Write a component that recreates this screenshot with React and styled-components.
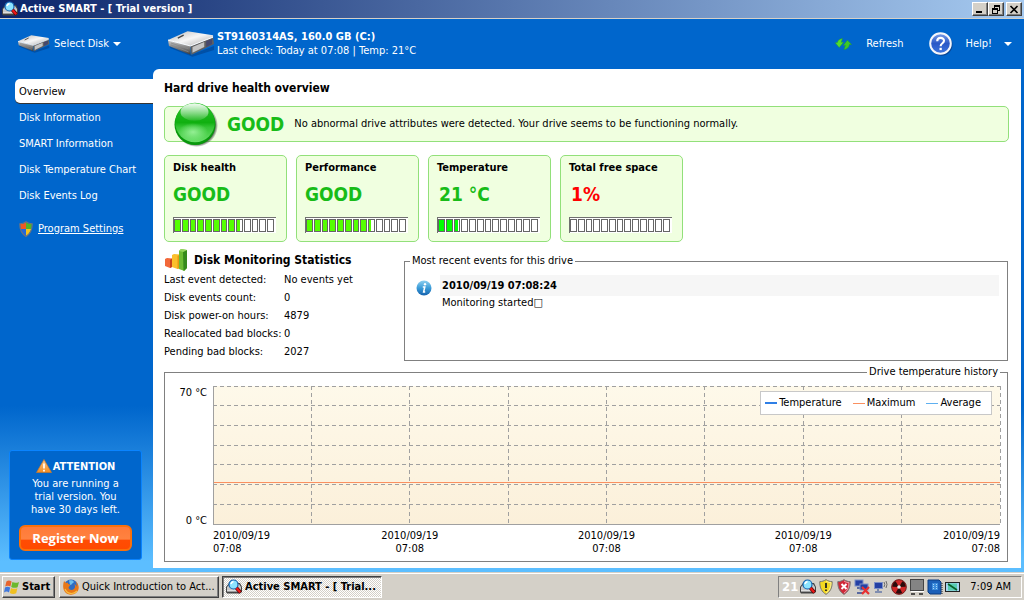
import React from 'react';
import styled, { createGlobalStyle, css } from 'styled-components';

const navItems = [
  'Overview',
  'Disk Information',
  'SMART Information',
  'Disk Temperature Chart',
  'Disk Events Log',
];

const cards = [
  { title: 'Disk health', value: 'GOOD', level: 8.5, fill: '#55ff00' },
  { title: 'Performance', value: 'GOOD', level: 8.5, fill: '#55ff00' },
  { title: 'Temperature', value: '21 °C', level: 2.7, fill: '#00ff00', inset: true },
  { title: 'Total free space', value: '1%', level: 0, fill: '#00ff00', inset: true, alert: true },
];

const stats = [
  ['Last event detected:', 'No events yet'],
  ['Disk events count:', '0'],
  ['Disk power-on hours:', '4879'],
  ['Reallocated bad blocks:', '0'],
  ['Pending bad blocks:', '2027'],
];

const series = [
  { name: 'Temperature', color: '#2f7fe6', weight: 2 },
  { name: 'Maximum', color: '#fa9060', weight: 1 },
  { name: 'Average', color: '#5fb0f0', weight: 1 },
];

const ticks = [0, 1, 2, 3, 4];

/* icons */

const DriveIcon = ({ width, height }) => (
  <svg width={width} height={height} viewBox="0 0 48 26" aria-hidden="true">
    <defs>
      <linearGradient id="driveTop" x1="0" y1="0" x2="1" y2="1">
        <stop offset="0" stopColor="#b8b8b8" />
        <stop offset="0.5" stopColor="#f6f6f6" />
        <stop offset="1" stopColor="#a8a8a8" />
      </linearGradient>
      <linearGradient id="driveSide" x1="0" y1="0" x2="0" y2="1">
        <stop offset="0" stopColor="#d0d0d0" />
        <stop offset="1" stopColor="#383838" />
      </linearGradient>
    </defs>
    <path d="M2 14 L24 24 L47 15 L47 19 L25 26 L2 17 Z" fill="#003a80" opacity="0.5" />
    <path d="M0 9 L23 15 L23 24 L1 15 Z" fill="url(#driveSide)" />
    <path d="M23 15 L46 6 L47 13 L24 24 Z" fill="#606060" />
    <path d="M25 16 L37 11 L37 16 L25 22 Z" fill="#c4c4c4" />
    <path d="M39 10 L45 8 L45 13 L39 16 Z" fill="#46486c" />
    <path d="M0 9 L20 0 L46 4 L46 6 L23 15 Z" fill="url(#driveTop)" />
    <path d="M0 9 L23 15 L46 6" fill="none" stroke="#fff" strokeWidth="1" />
    <path d="M10 7 L16 4" stroke="#444" strokeWidth="1.3" />
    <path d="M3 12 L21 18 M3 14 L21 21" stroke="#8a8a8a" strokeWidth="0.8" />
  </svg>
);

const SmartIcon = () => (
  <svg width="16" height="16" viewBox="0 0 16 16" aria-hidden="true">
    <path d="M0 8 L3 4 H14 L16 8 V13 L14 14.5 H1 L0 13 Z" fill="#444" />
    <path d="M1 8 L4 5 H13 L15 8 V12 H1 Z" fill="#c8c8c8" />
    <path d="M1 12 H14" stroke="#f4f4f4" />
    <circle cx="7.5" cy="5.5" r="4.5" fill="#8ce4ff" stroke="#1464b4" strokeWidth="1.2" />
    <path d="M5 5 A3 3 0 0 1 7.5 2.6" fill="none" stroke="#fff" strokeWidth="1.6" />
    <path d="M10.5 9 L14.5 13.5" stroke="#500" strokeWidth="3.6" />
    <path d="M10.5 9 L14.2 13.2" stroke="#f01818" strokeWidth="2.2" />
  </svg>
);

const RefreshIcon = () => (
  <svg width="17" height="12" viewBox="0 0 17 12" aria-hidden="true">
    <path d="M7.5 0.5 L6.2 4.2 H8.6 L4.2 9.6 L0.2 4.8 L2.4 4.6 C2.8 2.2 4.6 0.8 7.5 0.5 Z" fill="#52dc2c" stroke="#2a9c1c" strokeWidth="0.4" />
    <path d="M9 11.6 L10.4 7.4 H8.2 L12.4 2.2 L16.6 6.6 H14.4 C14 9.6 12 11.2 9 11.6 Z" fill="#3cc828" stroke="#2a9c1c" strokeWidth="0.4" />
  </svg>
);

const HelpIcon = () => (
  <svg width="24" height="24" viewBox="0 0 24 24" aria-hidden="true">
    <defs>
      <linearGradient id="helpFill" x1="0" y1="0" x2="0" y2="1">
        <stop offset="0" stopColor="#7da0ea" />
        <stop offset="0.5" stopColor="#2a58c6" />
        <stop offset="1" stopColor="#3c76e0" />
      </linearGradient>
    </defs>
    <circle cx="12.5" cy="12.8" r="11" fill="#0b2f70" opacity="0.6" />
    <circle cx="11.5" cy="11.5" r="10.3" fill="url(#helpFill)" stroke="#f4f6fb" strokeWidth="2" />
    <path d="M8.2 9.2 C8.2 4.8 15 4.8 15 8.8 C15 11.4 11.6 11.2 11.6 14.2" fill="none" stroke="#fff" strokeWidth="2.1" />
    <rect x="10.5" y="15.8" width="2.3" height="2.3" fill="#fff" />
  </svg>
);

const ShieldIcon = () => (
  <svg width="14" height="16" viewBox="0 0 14 16" aria-hidden="true">
    <clipPath id="shieldClip">
      <path d="M7 1.2 C9 2.6 10.8 3 12.8 3 C13 8.6 11 12.6 7 15 C3 12.6 1 8.6 1.2 3 C3.2 3 5 2.6 7 1.2 Z" />
    </clipPath>
    <g clipPath="url(#shieldClip)">
      <rect width="7" height="8" fill="#ee5a22" />
      <rect x="7" width="7" height="8" fill="#54b422" />
      <rect y="8" width="7" height="8" fill="#2268dc" />
      <rect x="7" y="8" width="7" height="8" fill="#f4c41c" />
    </g>
    <path d="M7 0.8 C9 2.3 10.8 2.8 13.2 2.8 C13.4 8.6 11.2 13 7 15.4 C2.8 13 0.6 8.6 0.8 2.8 C3.2 2.8 5 2.3 7 0.8 Z" fill="none" stroke="#6d7480" strokeWidth="1.1" />
  </svg>
);

const WarningIcon = () => (
  <svg width="16" height="14" viewBox="0 0 16 14" aria-hidden="true">
    <defs>
      <linearGradient id="warnFill" x1="0" y1="0" x2="0" y2="1">
        <stop offset="0" stopColor="#f8c890" />
        <stop offset="1" stopColor="#f28c20" />
      </linearGradient>
    </defs>
    <path d="M8 0.5 L15.5 13.5 H0.5 Z" fill="url(#warnFill)" stroke="#c87828" strokeWidth="0.7" strokeLinejoin="round" />
    <path d="M8 4.5 V9.5 M8 10.8 V12.4" stroke="#fff" strokeWidth="1.7" />
  </svg>
);

const OrbIcon = () => (
  <svg width="46" height="46" viewBox="0 0 46 46" aria-hidden="true">
    <defs>
      <linearGradient id="orbFill" x1="0" y1="0" x2="0" y2="1">
        <stop offset="0" stopColor="#2cc42c" />
        <stop offset="0.5" stopColor="#10b010" />
        <stop offset="0.62" stopColor="#34c434" />
        <stop offset="1" stopColor="#6ce06c" />
      </linearGradient>
      <linearGradient id="orbShine" x1="0" y1="0" x2="0" y2="1">
        <stop offset="0" stopColor="#ffffff" stopOpacity="0.95" />
        <stop offset="1" stopColor="#ffffff" stopOpacity="0.08" />
      </linearGradient>
      <radialGradient id="orbGlow">
        <stop offset="0" stopColor="#a8f8a8" stopOpacity="0.8" />
        <stop offset="1" stopColor="#a8f8a8" stopOpacity="0" />
      </radialGradient>
      <radialGradient id="orbShadow">
        <stop offset="0.86" stopColor="#405040" stopOpacity="0.9" />
        <stop offset="1" stopColor="#405040" stopOpacity="0" />
      </radialGradient>
    </defs>
    <circle cx="23.5" cy="24.5" r="21.5" fill="url(#orbShadow)" />
    <circle cx="22" cy="23.5" r="20.5" fill="#08980c" />
    <circle cx="22" cy="21.5" r="19.8" fill="url(#orbFill)" />
    <ellipse cx="20" cy="31" rx="15" ry="9" fill="url(#orbGlow)" />
    <ellipse cx="21.5" cy="11" rx="14" ry="8.8" fill="url(#orbShine)" />
  </svg>
);

const BarsIcon = () => (
  <svg width="24" height="22" viewBox="0 1 24 22" aria-hidden="true">
    <path d="M1 11 L3 10 L8 10.5 V19 L6 20 L1 18 Z" fill="#f2683a" />
    <path d="M6 12 L8 10.5 V19 L6 20 Z" fill="#c6431c" />
    <path d="M8 7 L10 6 L16 6.5 V20 L13.5 21 L8 19 Z" fill="#fbbf2c" />
    <path d="M13.5 8 L16 6.5 V20 L13.5 21 Z" fill="#e69a10" />
    <path d="M15 3 L17 1 L23 2 V20 L20.5 23 L15 21 Z" fill="#6cbc34" />
    <path d="M19 4 L23 2 V20 L19.5 23 Z" fill="#358a1c" />
    <path d="M15 3 L17 1 L23 2 L19 4 Z" fill="#93d45c" />
  </svg>
);

const InfoIcon = () => (
  <svg width="16" height="16" viewBox="0 0 16 16" aria-hidden="true">
    <defs>
      <linearGradient id="infoFill" x1="0" y1="0" x2="0" y2="1">
        <stop offset="0" stopColor="#8fd0f0" />
        <stop offset="0.5" stopColor="#3b9cd8" />
        <stop offset="1" stopColor="#1562ae" />
      </linearGradient>
    </defs>
    <circle cx="8" cy="8" r="7.5" fill="url(#infoFill)" />
    <circle cx="9" cy="4.2" r="1.2" fill="#fff" />
    <path d="M6.8 7 H8.8 L7.6 12 H9.2" fill="none" stroke="#fff" strokeWidth="1.5" />
  </svg>
);

const WindowsIcon = () => (
  <svg width="16" height="16" viewBox="0 0 16 16" aria-hidden="true">
    <path d="M2.4 2.4 C4.2 1.2 5.8 1.4 7.6 2.4 L6.4 7.4 C4.6 6.4 3 6.4 1.2 7.4 Z" fill="#e8642c" />
    <path d="M8.4 3 C10.2 4 12.4 4.2 15 3 L13.6 8.2 C11.4 9.2 9.2 9 7.2 8 Z" fill="#6cb82c" />
    <path d="M1 8.4 C2.8 7.4 4.4 7.6 6.2 8.4 L5 13.4 C3.4 12.2 1.8 12.2 0 13.4 Z" fill="#4078dc" />
    <path d="M7 9 C9 10 11 10.2 13.4 9.2 L12.2 14.2 C9.8 15.4 7.8 15 5.8 14 Z" fill="#f0c020" />
  </svg>
);

const FirefoxIcon = () => (
  <svg width="16" height="16" viewBox="0 0 16 16" aria-hidden="true">
    <circle cx="8" cy="7.5" r="7" fill="#2c6cc4" />
    <path d="M6 1.5 C10 0.5 12 3 10 4 C8 5 9 6 7 6" fill="#6cc0ec" />
    <path d="M1 2 L3 4 L5 3.4 C4.4 5 6 5.4 7.4 5.6 C7 7.4 5.4 7.6 5.6 9 C6.4 11 9 11.6 11 10 C12.6 8.6 12 6.4 11.4 5 C13 6 13.4 7 13.4 8 C14 6 13.6 4 12.6 2.4 C16.6 5.6 16.8 11 13 14 C9.6 16.6 4.6 16.2 2 13 C-0.4 10 -0.2 5.6 1 2 Z" fill="#e87818" />
    <path d="M2 10 C4 15 10 16 14 12" fill="none" stroke="#f8c040" strokeWidth="1.2" />
  </svg>
);

const TrayShield = ({ color, danger }) => (
  <svg width="16" height="16" viewBox="0 0 16 16" aria-hidden="true">
    <path d="M8 0.6 C10 2 12 2.6 14.2 2.6 C14.4 9 12 13 8 15.4 C4 13 1.6 9 1.8 2.6 C4 2.6 6 2 8 0.6 Z" fill={color} stroke="#777" />
    <path d="M8 2 C9.6 3.2 11.4 3.6 13 3.7 C13 9 11.2 12 8 14" fill="none" stroke="#fff" strokeWidth="0.8" opacity="0.7" />
    {danger
      ? <path d="M5.5 5 L10.5 10 M10.5 5 L5.5 10" stroke="#fff" strokeWidth="2" />
      : <path d="M8 4 V9 M8 10.5 V12" stroke="#222" strokeWidth="1.8" />}
  </svg>
);

const NetworkIcon = () => (
  <svg width="17" height="16" viewBox="0 0 17 16" aria-hidden="true">
    <rect x="1" y="1" width="8" height="6" fill="#2440a4" stroke="#7c90c8" />
    <path d="M3 9 H8" stroke="#5a6aa0" strokeWidth="2" />
    <rect x="6" y="5" width="8" height="6" fill="#2440a4" stroke="#7c90c8" />
    <path d="M3 14 H9" stroke="#5a6aa0" strokeWidth="2" />
    <path d="M8 8 L15 15 M15 8 L8 15" stroke="#e83030" strokeWidth="2.2" />
  </svg>
);

const WirelessIcon = () => (
  <svg width="16" height="16" viewBox="0 0 16 16" aria-hidden="true">
    <rect x="1.5" y="3.5" width="8" height="6" fill="#2440a4" stroke="#7c90c8" />
    <path d="M5 10 V12 M2 13 H9" stroke="#6478a8" strokeWidth="1.6" />
    <path d="M11 3 Q12.5 5.5 11 8 M13 2 Q15 5.5 13 9" fill="none" stroke="#6a6a6a" strokeWidth="1" />
  </svg>
);

const RadiationIcon = () => (
  <svg width="16" height="16" viewBox="0 0 16 16" aria-hidden="true">
    <circle cx="8" cy="8" r="7.4" fill="#d02828" stroke="#5c1414" strokeWidth="0.8" />
    <g fill="#2a0c0c">
      <path d="M8 8 L4.8 2.2 A6.6 6.6 0 0 1 11.2 2.2 Z" transform="rotate(60 8 8)" />
      <path d="M8 8 L4.8 2.2 A6.6 6.6 0 0 1 11.2 2.2 Z" transform="rotate(180 8 8)" />
      <path d="M8 8 L4.8 2.2 A6.6 6.6 0 0 1 11.2 2.2 Z" transform="rotate(300 8 8)" />
    </g>
    <circle cx="8" cy="8" r="1.8" fill="#eee" />
  </svg>
);

const ConnectionIcon = () => (
  <svg width="16" height="16" viewBox="0 0 16 16" aria-hidden="true">
    <rect x="1.5" y="0.5" width="13" height="11" fill="#848484" stroke="#444" />
    <path d="M2 12.5 H15" stroke="#fff" />
    <path d="M2 15 H6 M10 15 H14" stroke="#222" strokeWidth="1.6" />
  </svg>
);

const ChipIcon = () => (
  <svg width="16" height="16" viewBox="0 0 16 16" aria-hidden="true">
    <path d="M1 1 H12 L14 3 V15 H3 L1 13 Z" fill="#1c60b8" stroke="#0c3c80" />
    <rect x="5" y="4" width="6" height="7" fill="#3c8cdc" />
    <path d="M6 5.5 H7 M9 5.5 H10 M6 7.5 H7 M9 7.5 H10 M6 9.5 H7 M9 9.5 H10" stroke="#a8d4f8" />
    <path d="M15 4 V15" stroke="#222" strokeDasharray="1 1" />
  </svg>
);

const MonitorIcon = () => (
  <svg width="16" height="16" viewBox="0 0 16 16" aria-hidden="true">
    <rect x="0.5" y="3.5" width="14" height="9" fill="#a4d4f0" stroke="#222" />
    <path d="M3 4.5 H12 V11.5 H3 Z" fill="#58ccb0" />
    <path d="M3 5 L12 11" stroke="#086028" strokeWidth="1.6" />
  </svg>
);

const Caret = () => (
  <svg width="8" height="4" viewBox="0 0 8 4" aria-hidden="true">
    <path d="M0 0 H8 L4 4 Z" fill="#fff" />
  </svg>
);

const Meter = ({ level, fill }) => (
  <MeterTrack>
    {Array.from({ length: 13 }, (_, i) => (
      <MeterCell
        key={i}
        $fill={fill}
        $part={Math.round(Math.max(0, Math.min(1, level - i)) * 100)}
      />
    ))}
  </MeterTrack>
);

const TemperaturePlot = () => (
  <Plot>
    <PlotSvg role="img" aria-label="Drive temperature history">
      <defs>
        <linearGradient id="plotFill" x1="0" y1="0" x2="0" y2="1">
          <stop offset="0" stopColor="#fef9ea" />
          <stop offset="1" stopColor="#fbf0da" />
        </linearGradient>
      </defs>
      <rect width="100%" height="100%" fill="url(#plotFill)" />
      <g stroke="#a0a0a0" strokeDasharray="4 3" shapeRendering="crispEdges">
        {[0, 1, 2, 3, 4, 5, 6].map(n => (
          <line key={`h${n}`} x1="0" x2="100%" y1={`${(n * 100) / 7}%`} y2={`${(n * 100) / 7}%`} />
        ))}
        {[1, 2, 3, 4, 5, 6, 7, 8].map(n => (
          <line key={`v${n}`} x1={`${n * 12.5}%`} x2={`${n * 12.5}%`} y1="0" y2="100%" />
        ))}
      </g>
      <line x1="0" x2="100%" y1="70%" y2="70%" stroke="#fa9060" shapeRendering="crispEdges" />
      <g stroke="#a0a0a0" shapeRendering="crispEdges">
        <line x1="0" x2="0" y1="0" y2="100%" />
        <line x1="0" x2="100%" y1="100%" y2="100%" />
      </g>
    </PlotSvg>
    <Series>
      {series.map(({ name, color, weight }) => (
        <SeriesItem key={name} $color={color} $weight={weight}>{name}</SeriesItem>
      ))}
    </Series>
  </Plot>
);

const App = () => {
  return (
    <>
      <GlobalStyle />
      <Screen>
        <TitleBar>
          <SmartIcon />
          <h1>Active SMART - [ Trial version ]</h1>
          <WindowButton aria-label="Minimize">
            <svg width="10" height="9" viewBox="0 0 10 9"><path d="M1 7 H7" stroke="#000" strokeWidth="2" /></svg>
          </WindowButton>
          <WindowButton aria-label="Restore">
            <svg width="10" height="9" viewBox="0 0 10 9" shapeRendering="crispEdges">
              <path d="M3 0 H9 V6 H7 V5 H8 V2 H4 V3 H3 Z M1 3 H7 V9 H1 Z M2 5 V8 H6 V5 Z" fillRule="evenodd" />
            </svg>
          </WindowButton>
          <WindowButton aria-label="Close" $apart>
            <svg width="10" height="9" viewBox="0 0 10 9"><path d="M1.5 1 L8.5 8 M8.5 1 L1.5 8" stroke="#000" strokeWidth="1.6" /></svg>
          </WindowButton>
        </TitleBar>

        <Body>
          <Header>
            <SelectDisk>
              <DriveIcon width={32} height={18} />
              Select Disk
              <Caret />
            </SelectDisk>
            <Drive>
              <DriveIcon width={47} height={26} />
              <div>
                <strong>ST9160314AS, 160.0 GB (C:)</strong>
                <p>Last check: Today at 07:08 | Temp: 21°C</p>
              </div>
            </Drive>
            <HeaderButton $gap={14}>
              <RefreshIcon />
              Refresh
            </HeaderButton>
            <HeaderButton $gap={12}>
              <HelpIcon />
              Help!
              <Caret />
            </HeaderButton>
          </Header>

          <Columns>
            <Sidebar>
              <nav>
                {navItems.map((item, i) => (
                  <NavLink key={item} href="#" $active={i === 0}>{item}</NavLink>
                ))}
                <SettingsLink href="#">
                  <ShieldIcon />
                  <span>Program Settings</span>
                </SettingsLink>
              </nav>
              <Promo>
                <h2><WarningIcon />ATTENTION</h2>
                <p>You are running a trial version. You have 30 days left.</p>
                <RegisterButton>Register Now</RegisterButton>
              </Promo>
            </Sidebar>

            <Main>
              <PageTitle>Hard drive health overview</PageTitle>
              <Banner>
                <OrbIcon />
                <Status>GOOD</Status>
                <p>No abnormal drive attributes were detected. Your drive seems to be functioning normally.</p>
              </Banner>

              <Cards>
                {cards.map(({ title, value, level, fill, inset, alert }) => (
                  <Card key={title}>
                    <h3>{title}</h3>
                    <Status $alert={alert} $inset={inset}>{value}</Status>
                    <Meter level={level} fill={fill} />
                  </Card>
                ))}
              </Cards>

              <Details>
                <section>
                  <StatsTitle><BarsIcon />Disk Monitoring Statistics</StatsTitle>
                  <StatsTable>
                    <tbody>
                      {stats.map(([label, value]) => (
                        <tr key={label}>
                          <th scope="row">{label}</th>
                          <td>{value}</td>
                        </tr>
                      ))}
                    </tbody>
                  </StatsTable>
                </section>
                <Group>
                  <legend>Most recent events for this drive</legend>
                  <Event>
                    <InfoIcon />
                    <div>
                      <strong>2010/09/19 07:08:24</strong>
                      <p>Monitoring started□</p>
                    </div>
                  </Event>
                </Group>
              </Details>

              <HistoryGroup>
                <legend>Drive temperature history</legend>
                <Chart>
                  <YAxis>
                    <span>70 °C</span>
                    <span>0 °C</span>
                  </YAxis>
                  <TemperaturePlot />
                  <XAxis>
                    {ticks.map(n => (
                      <span key={n}>2010/09/19<br />07:08</span>
                    ))}
                  </XAxis>
                </Chart>
              </HistoryGroup>
            </Main>
          </Columns>
        </Body>

        <Taskbar>
          <StartButton><WindowsIcon />Start</StartButton>
          <TaskButton><FirefoxIcon />Quick Introduction to Act...</TaskButton>
          <TaskButton $pressed><SmartIcon />Active SMART - [ Trial...</TaskButton>
          <Tray>
            <TrayTemp>21</TrayTemp>
            <SmartIcon />
            <TrayShield color="#f4d820" />
            <TrayShield color="#d02838" danger />
            <NetworkIcon />
            <WirelessIcon />
            <RadiationIcon />
            <ConnectionIcon />
            <ChipIcon />
            <MonitorIcon />
            <time>7:09 AM</time>
          </Tray>
        </Taskbar>
      </Screen>
    </>
  );
};

const GlobalStyle = createGlobalStyle`
  * {
    box-sizing: border-box;
  }
  body {
    margin: 0;
    font: 11px/14px Tahoma, 'DejaVu Sans Condensed', 'DejaVu Sans', sans-serif;
    color: #000;
  }
  h1, h2, h3, p {
    margin: 0;
    font-size: inherit;
  }
  button {
    font: inherit;
    color: inherit;
    border: 0;
    padding: 0;
    background: none;
  }
  svg {
    flex: none;
    display: block;
  }
`;

const raised = css`
  background: #d4d0c8;
  border: 1px solid;
  border-color: #fff #404040 #404040 #fff;
  box-shadow: inset -1px -1px #808080;
`;

const Screen = styled.div`
  min-height: 100vh;
  display: flex;
  flex-direction: column;
`;

const TitleBar = styled.header`
  height: 19px;
  display: flex;
  align-items: center;
  padding: 0 2px;
  color: #fff;
  background: linear-gradient(90deg, #0a246a, #a6caf0);
  border-bottom: 1px solid #d4d0c8;
  h1 {
    flex: 1;
    margin-left: 2px;
  }
`;

const WindowButton = styled.button`
  ${raised}
  width: 16px;
  height: 14px;
  display: flex;
  justify-content: center;
  align-items: center;
  margin-left: ${props => (props.$apart ? '2px' : 0)};
`;

const Body = styled.div`
  flex: 1;
  display: flex;
  flex-direction: column;
  background: linear-gradient(#0066cc 70%, #5cbeff 98%);
`;

const Header = styled.div`
  height: 50px;
  display: flex;
  align-items: center;
  padding: 0 12px 0 18px;
  color: #fff;
`;

const SelectDisk = styled.button`
  width: 150px;
  display: flex;
  align-items: center;
  gap: 4px;
`;

const Drive = styled.div`
  flex: 1;
  display: flex;
  align-items: center;
  gap: 2px;
`;

const HeaderButton = styled.button`
  display: flex;
  align-items: center;
  gap: ${props => props.$gap}px;
  margin-left: 26px;
`;

const Columns = styled.div`
  flex: 1;
  display: flex;
  padding: 0 3px 4px 0;
`;

const Sidebar = styled.aside`
  width: 153px;
  display: flex;
  flex-direction: column;
  justify-content: space-between;
  padding: 10px 0 8px;
  color: #fff;
  nav {
    display: grid;
    gap: 2px;
    padding-left: 15px;
  }
`;

const NavLink = styled.a`
  line-height: 22px;
  padding: 2px 0 0 4px;
  color: ${props => (props.$active ? '#000' : '#fff')};
  background: ${props => (props.$active ? '#fff' : 'none')};
  box-shadow: ${props => (props.$active ? '0 1px #333' : 'none')};
  border-radius: 5px 0 0 5px;
  text-decoration: none;
`;

const SettingsLink = styled.a`
  display: flex;
  align-items: center;
  gap: 5px;
  margin-top: 12px;
  padding-left: 4px;
  color: #fff;
`;

const Promo = styled.section`
  margin: 0 11px 0 9px;
  padding: 8px 9px;
  text-align: center;
  line-height: 13px;
  background: #0066cc;
  border: 1px solid #0a84ff;
  border-radius: 3px;
  h2 {
    display: flex;
    justify-content: center;
    align-items: center;
    gap: 1px;
    margin-bottom: 4px;
  }
  p {
    padding: 0 8px;
  }
`;

const RegisterButton = styled.button`
  width: 100%;
  height: 26px;
  margin-top: 9px;
  color: #fff;
  font: bold 13px 'Open Sans', 'DejaVu Sans Condensed', sans-serif;
  background: linear-gradient(#ff7a38, #ff8240 55%, #ff4c04 60%, #ff4a00);
  border: 2px solid #f8700c;
  border-radius: 6px;
`;

const Main = styled.main`
  flex: 1;
  display: flex;
  flex-direction: column;
  padding: 11px 12px 6px 11px;
  background: #fff;
  border-radius: 6px 0 0 0;
`;

const PageTitle = styled.h2`
  && {
    font-size: 12px;
  }
  line-height: 16px;
  margin-bottom: 10px;
`;

const panel = css`
  background: #f0ffe0;
  border: 1px solid #92e07a;
  border-radius: 5px;
`;

const Banner = styled.div`
  ${panel}
  height: 36px;
  display: flex;
  align-items: center;
  padding-left: 8px;
  p {
    margin-left: 10px;
  }
  svg {
    margin-right: 8px;
  }
`;

const Status = styled.div`
  font-size: 19px;
  font-weight: bold;
  line-height: 24px;
  color: ${props => (props.$alert ? '#ff0000' : '#18bc18')};
  padding-left: ${props => (props.$inset ? '2px' : 0)};
`;

const Cards = styled.div`
  display: flex;
  gap: 9px;
  margin: 13px 0 7px;
`;

const Card = styled.section`
  ${panel}
  width: 123px;
  height: 87px;
  padding: 5px 8px;
  h3 {
    margin-bottom: 7px;
  }
`;

const MeterTrack = styled.div`
  width: 103px;
  height: 16px;
  display: flex;
  gap: 1px;
  margin-top: 11px;
  padding: 1px 2px 1px 0;
  background: #fff;
  border: solid #707070;
  border-width: 1px 0 0 1px;
`;

const MeterCell = styled.span`
  flex: 1;
  border: 1px solid #666;
  background: linear-gradient(90deg, ${props => props.$fill} ${props => props.$part}%, #fff ${props => props.$part}%);
`;

const Details = styled.div`
  display: flex;
  section {
    width: 240px;
  }
`;

const StatsTitle = styled.h2`
  display: flex;
  align-items: center;
  gap: 6px;
  && {
    font-size: 12px;
  }
`;

const StatsTable = styled.table`
  border-collapse: collapse;
  th, td {
    height: 18px;
    padding: 0;
    text-align: left;
    font-weight: normal;
    white-space: nowrap;
  }
  th {
    width: 120px;
  }
`;

const Group = styled.fieldset`
  flex: 1;
  min-width: 0;
  margin: 5px 1px 0 0;
  padding: 7px 8px 8px 11px;
  border: 1px solid #808080;
  legend {
    margin-left: -6px;
    padding: 0 2px;
  }
`;

const Event = styled.div`
  display: flex;
  align-items: flex-start;
  gap: 8px;
  div {
    flex: 1;
  }
  svg {
    margin-top: 5px;
  }
  strong {
    display: block;
    padding: 1px 0 0 2px;
    line-height: 20px;
    background: #f6f6f6;
  }
  p {
    padding-left: 2px;
  }
`;

const HistoryGroup = styled(Group)`
  display: flex;
  flex-direction: column;
  margin-top: 4px;
  padding: 7px 7px 6px 10px;
  legend {
    margin: 0 0 0 auto;
  }
`;

const Chart = styled.div`
  flex: 1;
  display: grid;
  grid-template-columns: 32px 1fr;
  grid-template-rows: 1fr auto;
  column-gap: 6px;
  row-gap: 5px;
`;

const YAxis = styled.div`
  display: flex;
  flex-direction: column;
  justify-content: space-between;
  margin-bottom: -4px;
  text-align: right;
  white-space: nowrap;
`;

const Plot = styled.div`
  position: relative;
  min-height: 100px;
`;

const PlotSvg = styled.svg`
  position: absolute;
  width: 100%;
  height: 100%;
  overflow: visible;
`;

const Series = styled.div`
  position: absolute;
  top: 5px;
  right: 8px;
  display: flex;
  gap: 11px;
  padding: 4px 10px 4px 4px;
  background: #fff;
  border: 1px solid #c8c8c8;
`;

const SeriesItem = styled.span`
  display: flex;
  align-items: center;
  gap: 2px;
  &::before {
    content: '';
    width: 12px;
    height: ${props => props.$weight}px;
    background: ${props => props.$color};
  }
`;

const XAxis = styled.div`
  grid-column: 2;
  display: grid;
  grid-template-columns: 1fr 2fr 2fr 2fr 1fr;
  line-height: 13px;
  text-align: center;
  span:first-child {
    text-align: left;
  }
  span:last-child {
    text-align: right;
  }
`;

const Taskbar = styled.footer`
  height: 28px;
  display: flex;
  align-items: center;
  padding: 2px 2px 0;
  background: #d4d0c8;
  box-shadow: inset 0 1px #d4d0c8, inset 0 2px #fff;
`;

const StartButton = styled.button`
  ${raised}
  width: 53px;
  height: 22px;
  display: flex;
  align-items: center;
  gap: 2px;
  padding-left: 1px;
  margin-right: 4px;
  && {
    font-weight: bold;
  }
`;

const TaskButton = styled.button`
  ${raised}
  width: 160px;
  height: 22px;
  display: flex;
  align-items: center;
  gap: 3px;
  padding: 0 3px;
  margin-right: 3px;
  white-space: nowrap;
  ${props => props.$pressed && css`
    && {
      font-weight: bold;
    }
    background: repeating-conic-gradient(#fff 0 25%, #d4d0c8 0 50%) 0 0 / 2px 2px;
    border-color: #404040 #fff #fff #404040;
    box-shadow: inset 1px 1px #808080;
  `}
`;

const Tray = styled.div`
  height: 22px;
  display: flex;
  align-items: center;
  gap: 2px;
  margin-left: auto;
  padding: 0 10px 0 3px;
  border: 1px solid;
  border-color: #808080 #fff #fff #808080;
  time {
    margin-left: 7px;
  }
`;

const TrayTemp = styled.span`
  color: #fff;
  font-size: 13px;
  font-weight: bold;
`;

export default App;
